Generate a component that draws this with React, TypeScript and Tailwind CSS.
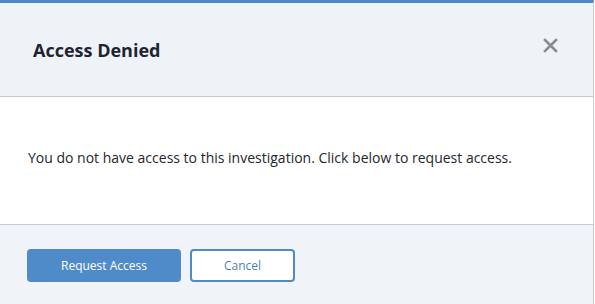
export default function App() {
  return (
    <div className="h-[304px] w-[595px] overflow-hidden bg-white font-['Open_Sans',sans-serif]">
      <div className="flex h-full w-[594px] flex-col border-t-[3px] border-r border-t-[#4a86c8] border-r-[#c9ced6]">
        <header className="flex h-[94px] items-center justify-between border-b border-[#c5cad3] bg-[#eef3f8] pl-[33px] pr-[33px]">
          <h2 className="pt-[1px] text-[18px] font-bold text-[#1f2430]">Access Denied</h2>
          <button className="mb-[8px] grid h-5 w-5 place-items-center text-[#888c91]" aria-label="Close">
            <svg width="15" height="15" viewBox="0 0 15 15" fill="none" stroke="currentColor" strokeWidth="2.6" strokeLinecap="square">
              <path d="M2 2l11 11M13 2L2 13" />
            </svg>
          </button>
        </header>
        <main className="flex h-[128px] items-center border-b border-[#c5cad3] pb-[6px] pl-[28px]">
          <p className="text-[14px] text-[#23272e]">
            You do not have access to this investigation. Click below to request access.
          </p>
        </main>
        <footer className="flex flex-1 items-center gap-[9px] bg-[#f0f4f8] pt-[2px] pl-[27px]">
          <button className="h-[33px] w-[154px] rounded-[4px] bg-[#4f8bc9] text-[12px] text-white">
            Request Access
          </button>
          <button className="h-[33px] w-[105px] rounded-[4px] border-2 border-[#4f8bc9] bg-white text-[12px] text-[#4a7fbf]">
            Cancel
          </button>
        </footer>
      </div>
    </div>
  );
}
